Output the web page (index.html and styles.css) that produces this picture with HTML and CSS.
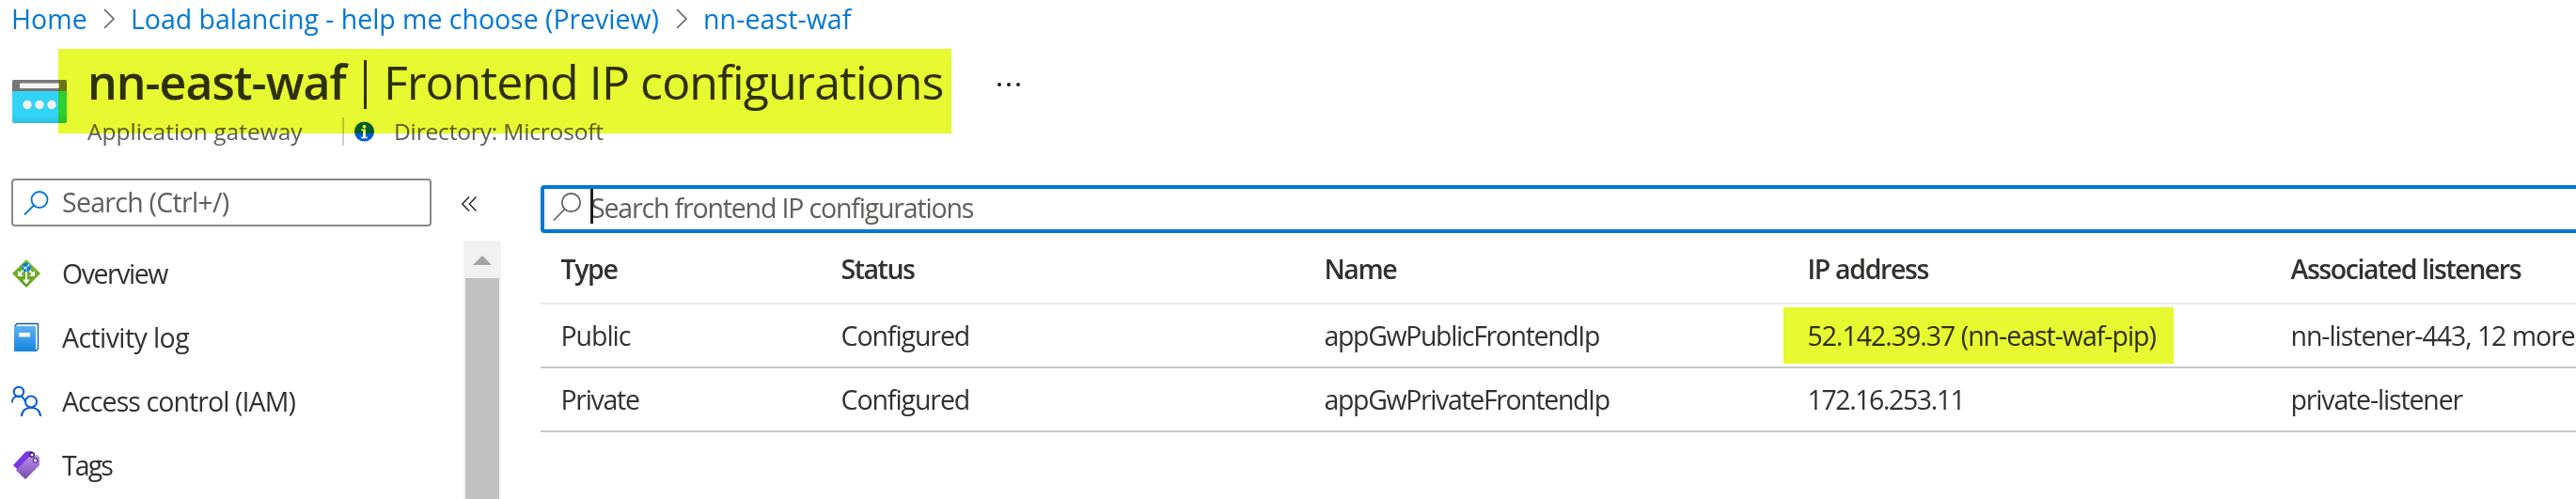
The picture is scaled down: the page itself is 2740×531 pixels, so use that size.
FILE: index.html
```html
<!DOCTYPE html>
<html lang="en">
<head>
<meta charset="utf-8">
<title>nn-east-waf | Frontend IP configurations</title>
<link rel="stylesheet" href="styles.css">
</head>
<body>
<nav class="breadcrumb">
  <a class="crumb crumb-home">Home</a>
  <svg class="chevron" viewBox="0 0 12 22"><path d="M1 1l10 10L1 21"/></svg>
  <a class="crumb crumb-lb">Load balancing - help me choose (Preview)</a>
  <svg class="chevron" viewBox="0 0 12 22"><path d="M1 1l10 10L1 21"/></svg>
  <a class="crumb crumb-waf">nn-east-waf</a>
</nav>
<header class="header">
  <svg class="gateway-icon" viewBox="0 0 58 46">
    <defs><linearGradient id="gw" x1="0" y1="0" x2="0" y2="1"><stop offset=".8" stop-color="#32d4f5"/><stop offset="1" stop-color="#2bbfe4"/></linearGradient></defs>
    <rect width="58" height="46" rx="2" fill="url(#gw)"/>
    <path d="M0 12V2a2 2 0 0 1 2-2h54a2 2 0 0 1 2 2v10z" fill="#767676"/>
    <rect x="8" y="3.5" width="42" height="5.5" rx="1" fill="#f2f2f2"/>
    <circle cx="16" cy="26.5" r="4.7" fill="#f2f2f2"/><circle cx="29" cy="26.5" r="4.7" fill="#f2f2f2"/><circle cx="42" cy="26.5" r="4.7" fill="#f2f2f2"/>
  </svg>
  <div class="heading">
    <h1 class="title"><span class="title-name">nn-east-waf</span><span class="title-bar"></span><span class="title-page">Frontend IP configurations</span>
      <svg class="more" viewBox="0 0 26 6"><circle cx="3" cy="3" r="2"/><circle cx="13" cy="3" r="2"/><circle cx="23" cy="3" r="2"/></svg></h1>
    <div class="subtitle">
      <span class="kind">Application gateway</span>
      <span class="divider"></span>
      <svg class="info" viewBox="0 0 22 22"><circle cx="11" cy="11" r="11" fill="#015cda"/><circle cx="11" cy="5.5" r="2" fill="#fff"/><path d="M7.500 8.500h5v8.500h2v1.500h-7v-1.500h2v-7h-2z" fill="#fff"/></svg>
      <span class="directory">Directory: Microsoft</span>
    </div>
  </div>
  <div class="marker marker-title"></div>
</header>
<div class="content">
  <aside class="sidebar">
    <div class="sidebar-top">
      <div class="menu-search">
        <svg class="menu-glass" viewBox="0 0 26 26"><circle cx="17" cy="9.5" r="8.5"/><path d="M11 15.500L1 25.500"/></svg>
        <span class="menu-placeholder">Search (Ctrl+/)</span>
      </div>
      <svg class="collapse" viewBox="0 0 16 16"><path d="M8 .5L.8 8 8 15.500M15.500 .5L8.300 8l7.200 7.500"/></svg>
    </div>
    <div class="menu">
      <ul class="menu-list">
        <li class="menu-item">
          <svg class="menu-icon" viewBox="0 0 32 32"><defs><linearGradient id="ov" x1="0" y1="0" x2="0" y2="1"><stop offset="0" stop-color="#7fbf35"/><stop offset="1" stop-color="#5e9a1e"/></linearGradient></defs><path d="M16 1l15 15-15 15L1 16z" fill="url(#ov)"/><path d="M16 13v12M13.500 12l-5 5M18.500 12l5 5" fill="none" stroke="#fff" stroke-width="2"/><path d="M12 22.500h8L16 27.500zM7 13v6h6zM25 13v6h-6z" fill="#fff"/><circle cx="16" cy="9.500" r="4.800" fill="#0f7cd6"/><path d="M12 8.500l3 1.500 4-3M15 10l2 3.500M15 10l-2.500 2" stroke="#b8e4ff" fill="none"/><circle cx="15" cy="10" r="1.300" fill="#fff"/><circle cx="18.500" cy="7.300" r="1" fill="#fff"/></svg>
          <span class="item-overview">Overview</span></li>
        <li class="menu-item">
          <svg class="menu-icon" viewBox="0 0 32 32"><defs><linearGradient id="lg" x1="0" y1="0" x2="0" y2="1"><stop offset="0" stop-color="#5eb3f3"/><stop offset="1" stop-color="#1485dc"/></linearGradient></defs><path d="M3.500 4.500L6 1.500h22.500V28L25.500 31" fill="#fff" stroke="#0c5ba5" stroke-width="1.300"/><rect x="3" y="4" width="23" height="27" rx="1" fill="url(#lg)"/><rect x="8" y="11" width="12" height="4.500" fill="#fff"/></svg>
          <span class="item-activity">Activity log</span></li>
        <li class="menu-item">
          <svg class="menu-icon" viewBox="0 0 32 32"><g fill="none" stroke="#015cda" stroke-width="2"><circle cx="8" cy="6" r="5.200"/><path d="M.8 17.500c0-8.500 11.500-9.500 13.800-1.500"/><circle cx="21" cy="16.500" r="6"/><path d="M11 32c0-12.500 20-12.500 20 0"/></g></svg>
          <span class="item-access">Access control (IAM)</span></li>
        <li class="menu-item">
          <svg class="menu-icon" viewBox="0 0 32 32"><defs><linearGradient id="tg" x1="0" y1="0" x2="0" y2="1"><stop offset="0" stop-color="#bd94ec"/><stop offset="1" stop-color="#7849b0"/></linearGradient></defs><path d="M2 16L15.500 1.500 22 1l3 3L7 21z" fill="#7738dd"/><path d="M5 21.500L20 6l8-1 2 3v8L15 31z" fill="url(#tg)"/><circle cx="22" cy="5" r="2.300" fill="#fff" stroke="#3b1b75" stroke-width="1.500"/><circle cx="25.500" cy="11" r="2.300" fill="#fff" stroke="#65409f" stroke-width="1.500"/></svg>
          <span class="item-tags">Tags</span></li>
      </ul>
      <div class="scrollbar"><svg class="scroll-up" viewBox="0 0 20 10"><path d="M0 10L10 0l10 10z"/></svg><div class="scroll-thumb"></div></div>
    </div>
  </aside>
  <main class="main">
    <div class="filter">
      <svg class="filter-glass" viewBox="0 0 30 30"><circle cx="19.500" cy="10.500" r="9.700"/><path d="M12.800 17.500L.8 29.500"/></svg>
      <span class="filter-placeholder">Search frontend IP configurations</span>
      <span class="caret"></span>
    </div>
    <div class="table">
      <div class="row row-head"><span class="head-type">Type</span><span>Status</span><span>Name</span><span class="head-ip">IP address</span><span>Associated listeners</span></div>
      <div class="row"><span class="public">Public</span><span class="status">Configured</span><span class="name">appGwPublicFrontendIp</span><span class="public-ip">52.142.39.37 (nn-east-waf-pip)</span><span class="public-listener">nn-listener-443, 12 more</span><div class="marker marker-ip"></div></div>
      <div class="row"><span class="private">Private</span><span class="status">Configured</span><span class="name">appGwPrivateFrontendIp</span><span class="private-ip">172.16.253.11</span><span class="private-listener">private-listener</span></div>
    </div>
  </main>
</div>
</body>
</html>
```
FILE: styles.css
```css
* { box-sizing: border-box; }
body { margin: 0; width: 2740px; height: 531px; overflow: hidden; background: #fff; color: #323130; font: 28.5px/1 "Open Sans", "Noto Sans", sans-serif; white-space: nowrap; }
svg { display: block; flex: none; overflow: visible; }

.breadcrumb { display: flex; align-items: center; height: 40px; padding-left: 12px; line-height: 40px; color: #0078d4; }
.chevron { width: 12px; height: 22px; margin: 0 17px; fill: none; stroke: #605e5c; stroke-width: 1.5; }
.crumb { flex: none; }
.crumb-home { width: 81px; letter-spacing: .1px; }
.crumb-lb { width: 563px; letter-spacing: -.03px; }
.crumb-waf { letter-spacing: .1px; }

.header { position: relative; display: flex; height: 115px; padding: 11px 0 0 13px; }
.gateway-icon { width: 58px; height: 46px; margin: 34px 22px 0 0; }
.title { display: flex; align-items: center; height: 72px; margin: 0; font-size: 50px; font-weight: 400; line-height: 72px; color: #323130; }
.title-name { flex: none; width: 294px; font-weight: 600; letter-spacing: -1px; }
.title-bar { flex: none; width: 3px; height: 52px; margin: 6px 18px 0 0; background: #323130; }
.title-page { flex: none; width: 652px; letter-spacing: -.92px; }
.more { width: 26px; height: 6px; margin-top: 6px; fill: #201f1e; }
.subtitle { display: flex; align-items: center; height: 34px; font-size: 24.5px; line-height: 34px; color: #605e5c; }
.kind { width: 271px; }
.divider { width: 2px; height: 30px; background: #ccc; }
.info { width: 21px; height: 22px; margin: 0 21px 0 11px; }
.directory { letter-spacing: -.16px; }

/* Highlighter strokes tint whatever lies beneath them */
.marker { position: absolute; background: #e6f931; mix-blend-mode: multiply; }
.marker-title { left: 62px; top: 12px; width: 950px; height: 90px; }
.marker-ip { left: 1322px; top: 3px; width: 415px; height: 60px; }

.content { display: flex; height: 376px; }
.sidebar { flex: none; width: 575px; }
.sidebar-top { display: flex; height: 101px; padding: 35px 0 0 12px; }
.menu-search { display: flex; width: 447px; height: 51px; padding-left: 11px; border: 2px solid #8a8886; border-radius: 4px; line-height: 46px; color: #605e5c; }
.menu-placeholder { letter-spacing: -.72px; }
.menu-glass { width: 26px; height: 26px; margin: 11px 15px 0 0; fill: none; stroke: #0078d4; stroke-width: 1.8; }
.collapse { width: 16px; height: 16px; margin: 19px 0 0 32px; fill: none; stroke: #201f1e; stroke-width: 1.4; }
.menu { display: flex; }
.menu-list { width: 481px; margin: 0 0 0 12px; padding: 0; list-style: none; }
.menu-item { display: flex; align-items: center; gap: 22px; height: 68px; padding-top: 2px; line-height: 66px; }
.menu-icon { width: 32px; height: 32px; }
.item-overview { letter-spacing: -1.45px; }
.item-activity { letter-spacing: -.59px; }
.item-access { letter-spacing: -.91px; }
.item-tags { letter-spacing: -1.9px; }
.scrollbar { width: 40px; height: 275px; padding: 16px 2px 0; background: #f1f1f1; }
.scroll-up { width: 20px; height: 10px; margin: 0 auto 14px; fill: #a3a3a3; }
.scroll-thumb { height: 235px; background: #c1c1c1; }

.main { flex: none; width: 2200px; padding-top: 42px; }
.filter { position: relative; display: flex; height: 51px; padding-left: 9px; border: 4px solid #0078d7; border-radius: 4px; line-height: 40px; color: #605e5c; }
.filter-glass { width: 30px; height: 30px; margin: 4px 10px 0 0; fill: none; stroke: #605e5c; stroke-width: 1.7; }
.filter-placeholder { letter-spacing: -1.16px; }
.caret { position: absolute; left: 49px; top: 0; width: 3px; height: 37px; background: #201f1e; }
.row { position: relative; display: grid; grid-template-columns: 298px 514px 514px 514px 1fr; height: 68px; padding: 1px 0 0 21.5px; border-bottom: 2px solid #c8c8c8; line-height: 65px; }
.row-head { height: 76px; border-bottom-color: #eaeaea; font-weight: 600; line-height: 74px; letter-spacing: -1.45px; }
.head-type { letter-spacing: -1.4px; }
.head-ip { letter-spacing: -1.35px; }
.public { letter-spacing: -1.05px; }
.private { letter-spacing: -1.3px; }
.status { letter-spacing: -1.07px; }
.name { letter-spacing: -1.36px; }
.public-ip { letter-spacing: -1.02px; }
.private-ip { letter-spacing: -1.42px; }
.public-listener { letter-spacing: -1.05px; }
.private-listener { letter-spacing: -1.15px; }
```
